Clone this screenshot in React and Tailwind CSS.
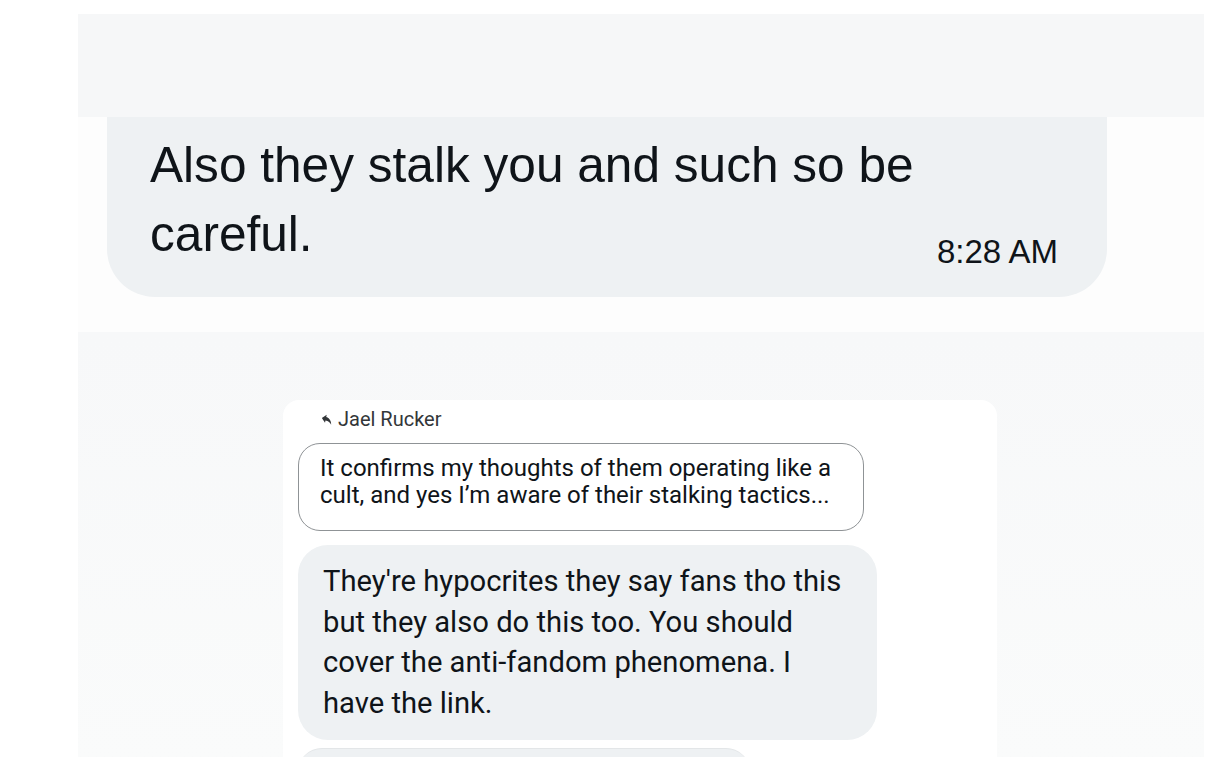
export default function App() {
  return (
    <div className="min-h-screen bg-white" style={{ fontFamily: "Roboto, sans-serif" }}>
      <div className="ml-[78px] w-[1126px] pt-[14px]">
        {/* top strip */}
        <div className="h-[103px] bg-[#f6f7f8]" />

        {/* first message */}
        <div className="h-[215px] bg-[#fdfdfd] pl-[29px]">
          <div className="flex w-[1000px] items-end rounded-b-[48px] bg-[#eef1f3] pb-[28px] pl-[43px] pr-[49px] pt-[14px]">
            <p
              className="flex-1 text-[49.6px] leading-[69px] text-[#0f1419]"
              style={{ fontFamily: "'Liberation Sans', Arial, sans-serif" }}
            >
              Also they stalk you and such so be
              <br />
              careful.
            </p>
            <span
              className="mb-[1px] text-[33px] leading-none text-[#0f1419]"
              style={{ fontFamily: "'Liberation Sans', Arial, sans-serif" }}
            >
              8:28 AM
            </span>
          </div>
        </div>

        {/* reply panel */}
        <div className="h-[425px] bg-gradient-to-b from-[#f7f8f9] to-[#fafbfb] pl-[205px] pt-[68px]">
          <div className="h-[357px] w-[714px] overflow-hidden rounded-t-[16px] bg-white px-[15px] pt-[7px]">
            <div className="flex items-center gap-[4px] pl-[22px] text-[20px] leading-[24px] text-[#333639]">
              <svg viewBox="0 0 24 24" className="h-[14px] w-[14px] rotate-[12deg]" fill="#333639">
                <path d="M10 9V5l-7 7 7 7v-4.1c5 0 8.5 1.6 11 5.1-1-5-4-10-11-11z" />
              </svg>
              <span>Jael Rucker</span>
            </div>

            <div className="mt-[12px] w-[566px] rounded-[22px] border border-[#8f9396] px-[21px] pb-[21px] pt-[11px] text-[24px] leading-[27px] text-[#0f1419]">
              It confirms my thoughts of them operating like a cult, and yes I’m aware of their stalking tactics...
            </div>

            <div className="mt-[14px] w-[579px] rounded-[30px] bg-[#eef1f3] px-[25px] pb-[17px] pt-[16px] text-[29.2px] leading-[40.5px] text-[#0f1419]">
              They're hypocrites they say fans tho this but they also do this too. You should cover the anti-fandom phenomena. I have the link.
            </div>

            <div className="mt-[8px] h-[40px] w-[452px] rounded-t-[24px] border-t border-[#e3e6e8] bg-[#eef1f3]" />
          </div>
        </div>
      </div>
    </div>
  )
}
